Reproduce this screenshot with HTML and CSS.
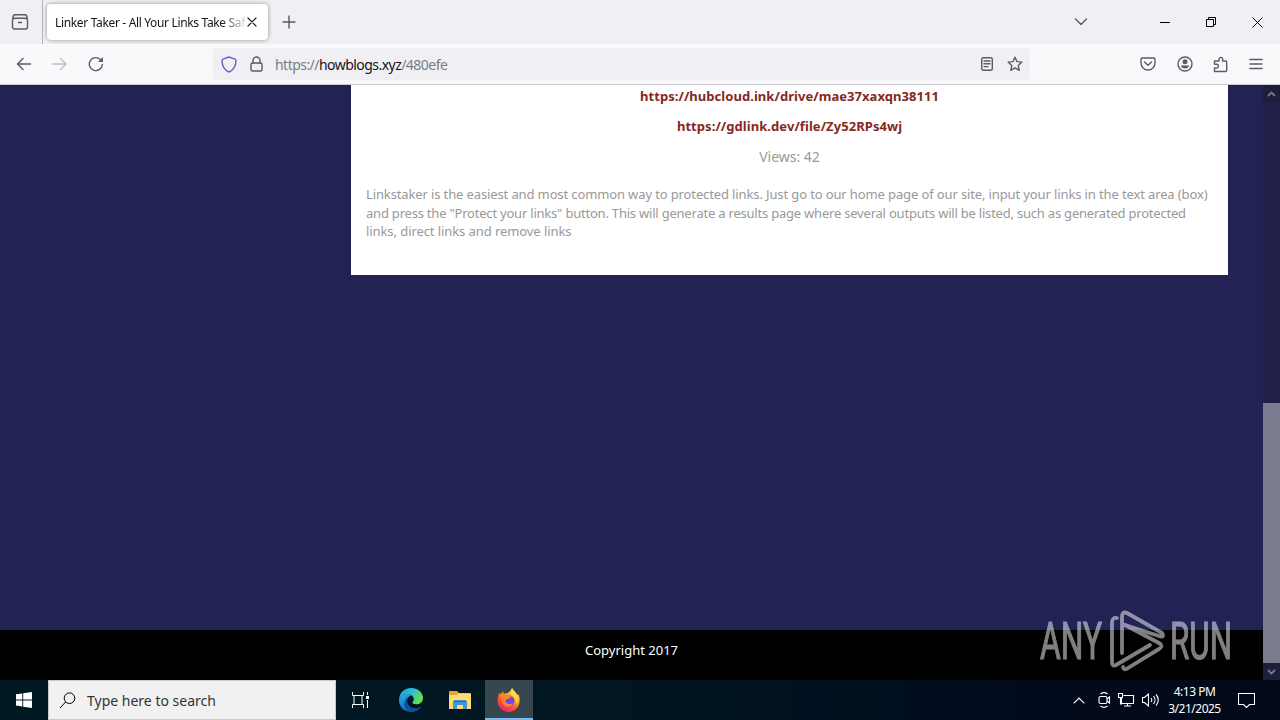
FILE: index.html
```html
<!DOCTYPE html>
<html lang="en">
<head>
<meta charset="utf-8">
<title>Linker Taker</title>
<link rel="stylesheet" href="styles.css">
</head>
<body>
<div class="screen">
  <header class="tabs">
    <div class="tabs-view"><svg width="18" height="18" viewBox="0 0 18 18" class="ico"><path d="M4 1.700h10M3.500 5.200h11a2 2 0 0 1 2 2v6.800a2 2 0 0 1-2 2h-11a2 2 0 0 1-2-2V7.200a2 2 0 0 1 2-2zM7.500 9.500h3M1.700 5c.3-2 1-3.300 2.300-3.300M16.300 5c-.3-2-1-3.300-2.300-3.300"/></svg></div>
    <div class="tab"><span class="tab-title">Linker Taker - All Your Links Take Saf</span><svg width="10" height="10" viewBox="0 0 10 10" class="ico dark"><path d="M1 1l8 8M9 1l-8 8"/></svg></div>
    <svg width="14" height="14" viewBox="0 0 14 14" class="ico newtab"><path d="M7 1v12M1 7h12"/></svg>
    <div class="window-buttons">
      <svg width="14" height="10" viewBox="0 0 14 10" class="ico"><path d="M1.500 2L7 7.500 12.500 2"/></svg>
      <svg width="11" height="11" viewBox="0 0 11 11" class="ico black minimize"><path d="M0 5.500h10"/></svg>
      <svg width="11" height="11" viewBox="0 0 11 11" class="ico black"><path d="M.5 2.500h7v7h-7zM2.500 2.500v-2h7v7h-2"/></svg>
      <svg width="11" height="11" viewBox="0 0 11 11" class="ico black"><path d="M.5.5l10 10M10.500.5l-10 10"/></svg>
    </div>
  </header>
  <nav class="toolbar">
    <div class="nav-buttons">
      <svg width="16" height="16" viewBox="0 0 16 16" class="ico"><path d="M14.500 8H1.500M7 2.500L1.500 8 7 13.500"/></svg>
      <svg width="16" height="16" viewBox="0 0 16 16" class="ico off"><path d="M1 8h13M8.500 2.500L14 8 8.500 13.500"/></svg>
      <svg width="16" height="16" viewBox="0 0 16 16" class="ico"><path d="M14.300 8.500A6.500 6.500 0 1 1 12.300 3.400L14 5"/><path d="M15 1v5h-5z" fill="#5b5b66" stroke="none"/></svg>
    </div>
    <div class="urlbar">
      <svg width="16" height="17" viewBox="0 0 16 17" class="ico shield"><path d="M8 1l6 2.200c.8.3 1 .7 1 1.500-.1 5-2 9-7 11.300C3 13.700 1.100 9.700 1 4.700c0-.8.2-1.200 1-1.500z"/></svg>
      <svg width="13" height="16" viewBox="0 0 13 16" class="ico lock"><rect x="1" y="7" width="11" height="8" rx="1.500"/><path d="M3 7V4.500a3.500 3.500 0 0 1 7 0V7"/></svg>
      <span class="url">https://<b>howblogs.xyz</b>/480efe</span>
      <svg width="12" height="14" viewBox="0 0 12 14" class="ico reader"><rect x=".7" y=".7" width="10.600" height="12.600" rx="1.500"/><path d="M3 4h6M3 6.800h6M3 9.600h4"/></svg>
      <svg width="16" height="16" viewBox="0 0 16 16" class="ico"><path d="M8 1.200l2 4.400 4.900.5-3.700 3.300 1 4.900L8 11.800l-4.200 2.500 1-4.900L1.100 6.100 6 5.600z"/></svg>
    </div>
    <div class="tools">
      <svg width="16" height="14" viewBox="0 0 16 14" class="ico"><path d="M2.500 1h11c1 0 1.500.6 1.500 1.500V6a7 7 0 0 1-14 0V2.500C1 1.600 1.500 1 2.500 1zM4.500 5L8 8.300 11.500 5"/></svg>
      <svg width="16" height="16" viewBox="0 0 16 16" class="ico"><circle cx="8" cy="8" r="7"/><g fill="#5b5b66" stroke="none"><circle cx="8" cy="5.800" r="2.500"/><path d="M4 9.500h8c0 2-2 3-4 3s-4-1-4-3z"/></g></svg>
      <svg width="15" height="17" viewBox="0 0 15 17" class="ico"><path d="M1.500 15.500V12h2a1.800 1.800 0 0 0 0-3.800h-2V5H6V3.200a1.800 1.800 0 0 1 3.600 0V5h2.900c.8 0 1.200.4 1.200 1.200v8.100c0 .8-.4 1.200-1.200 1.200z"/></svg>
      <svg width="14" height="12" viewBox="0 0 14 12" class="ico"><path d="M1 1.500h12M1 6h12M1 10.500h12"/></svg>
    </div>
  </nav>
  <main class="viewport">
    <div class="page">
      <article class="card">
        <a class="link link-one">https://hubcloud.ink/drive/mae37xaxqn38111</a>
        <a class="link link-two">https://gdlink.dev/file/Zy52RPs4wj</a>
        <p class="views">Views: 42</p>
        <p class="about"><span class="l1">Linkstaker is the easiest and most common way to protected links. Just go to our home page of our site, input your links in the text area (box)</span><span class="l2">and press the "Protect your links" button. This will generate a results page where several outputs will be listed, such as generated protected</span><span class="l3">links, direct links and remove links</span></p>
      </article>
      <footer class="footer"><span>Copyright 2017</span></footer>
    </div>
    <aside class="scrollbar">
      <div class="arrow"><svg width="9" height="6" viewBox="0 0 9 6"><path d="M1 5l3.500-3.500L8 5"/></svg></div>
      <div class="track"></div>
      <div class="thumb"></div>
      <div class="arrow"><svg width="9" height="6" viewBox="0 0 9 6"><path d="M1 1l3.500 3.500L8 1"/></svg></div>
    </aside>
  </main>
  <footer class="taskbar">
    <div class="start"><svg width="16" height="16" viewBox="0 0 16 16" fill="#fff"><path d="M0 2.300L6.300 1.400V7.400H0zM7.200 1.200L16 0v7.400H7.200zM0 8.400h6.300v6L0 13.500zM7.200 8.400H16V16l-8.800-1.300z"/></svg></div>
    <div class="search"><svg width="17" height="17" viewBox="0 0 17 17" class="ico black"><circle cx="10.500" cy="6.200" r="5.300"/><path d="M6.600 10L1 16"/></svg><span>Type here to search</span></div>
    <div class="app"><svg width="17" height="16" viewBox="0 0 17 16" fill="none" stroke="#fff"><path d="M.5 0v3.500h11V0M.5 16v-3.500h11V16M2 3.500v9M10 3.500v9M15.500 0v3M15.500 8v8"/><path d="M14 4h3v3h-3z" fill="#fff" stroke="none"/></svg></div>
    <div class="app edge"><svg width="24" height="24" viewBox="0 0 24 24"><defs><linearGradient id="edge-top" x2="1" y2=".4"><stop stop-color="#2295dc"/><stop offset=".55" stop-color="#2abfd6"/><stop offset="1" stop-color="#68db51"/></linearGradient><linearGradient id="edge-low" x2=".6" y2="1"><stop stop-color="#2db1ea"/><stop offset="1" stop-color="#0e55ac"/></linearGradient></defs><path d="M0 12C0 5 5 0 12 0c7 0 12 4.700 12 10 0 4-3 6.300-6.500 6.300-3 0-4.200-1-4-2 .1-.6 1.300-1.200 1.300-3C14.800 8.500 12 6 8.500 6 4 6 1 8.500 0 12z" fill="url(#edge-top)"/><path d="M0 12C1 8 4 6 8.300 6c2 0 3.300.5 4.300 1.200C9.700 8 8 10.500 8 13c0 4.600 4 8 9.500 7.400 1.700-.2 3-.8 4.500-1.600C20 22 16.500 24 12 24 5 24 0 19 0 12z" fill="url(#edge-low)"/><path d="M8 13c0 4.600 4 8 9.500 7.400 1.700-.2 3-.8 4.500-1.600-2 3.200-5.500 5.200-10 5.200-4-1-6.500-4.500-6.500-8.500 0-3.500 2.500-7 7.100-8.300C9.700 8 8 10.500 8 13z" fill="#114f97"/></svg></div>
    <div class="app"><svg width="22" height="18" viewBox="0 0 22 18"><path d="M0 1c0-.6.400-1 1-1h7l2 2h10.500c.6 0 1 .4 1 1v14H0z" fill="#e8a82b"/><path d="M0 4h8l1.500-1.500H22V18H0z" fill="#ffdb70"/><path d="M4 18V10.500l1.500-1.500h11l1.500 1.500V18h-4v-4H8v4z" fill="#4197d6"/><path d="M5 10h12v1H5z" fill="#226ea9"/></svg></div>
    <div class="app active"><svg width="24" height="24" viewBox="0 0 24 24"><defs><linearGradient id="fox" x1=".8" y1="0" x2=".2" y2="1"><stop stop-color="#fff14a"/><stop offset=".35" stop-color="#ffab24"/><stop offset=".65" stop-color="#ff5130"/><stop offset="1" stop-color="#e9187c"/></linearGradient></defs><path d="M15 0c1 2.500 4 4 5 7l1-1c1.500 2.500 2 5 1.500 8C21.800 20 17 24 12 24 5.500 24 .5 19 .5 12.500c0-3.500 1-6 3-8v2L6.500 3v3c1-.6 2-.8 3-.7C11 5.200 14 3 15 0z" fill="url(#fox)"/><circle cx="12" cy="13" r="5.500" fill="#7846dc"/><path d="M4 9c3-3 6-3 9-1l2 1c-2 0-3 2-5 2-2.500 1-2 4 1 5 2 .6 4-.5 5-1-1 3-4 4.500-7 3.500C5 17 3.500 12.500 4 9z" fill="#ff862b"/><path d="M15 0c1 2.500 4 4 5 7 1.500 4 1 7-1 9 0-4-1-7-4.500-9C13 5 14 2 15 0z" fill="#ffdb3c"/></svg></div>
    <div class="tray">
      <svg width="12" height="7" viewBox="0 0 12 7"><path d="M.7 6.300L6 1l5.300 5.300"/></svg>
      <svg width="13" height="16" viewBox="0 0 13 16"><rect x="1" y="4.500" width="8" height="7" rx="1.500"/><path d="M9 7l2.500-2v6L9 9M2.500 2c2-1.500 5-1.500 7 0M2.500 14c2 1.500 5 1.500 7 0"/></svg>
      <svg width="17" height="14" viewBox="0 0 17 14"><path d="M5.500 2.500h10v8h-12V5M9.500 10.500V13M6 13h7M.5.500h4v4h-4zM2.500 4.500V11H4"/></svg>
      <svg width="17" height="14" viewBox="0 0 17 14"><path d="M.5 4.500h2l4-3.500v12l-4-3.500h-2zM9 5c1 1.200 1 2.800 0 4M11.500 3.200c2 2.200 2 5.400 0 7.600M14 1.500c3 3.200 3 7.800 0 11"/></svg>
      <div class="clock"><span>4:13 PM</span><span>3/21/2025</span></div>
      <svg width="17" height="17" viewBox="0 0 17 17"><path d="M.5 1.500h16v11h-5L8.500 15.500l-3-3h-5z"/></svg>
    </div>
  </footer>
  <svg class="watermark" width="200" height="68" viewBox="0 0 200 68">
    <text x="3" y="52" textLength="62" lengthAdjust="spacingAndGlyphs">ANY</text>
    <g fill="none" stroke="currentColor" stroke-width="3.800" stroke-linecap="round" stroke-linejoin="round"><path d="M80 11q-5-1-5 5V55q0 5 4 3L113 38"/><path d="M85 46V10q0-6 5-4L125 26q3 5-3 3L88 18"/><path d="M88 18L122 36q5 3 0 6L91 61q-4 3-5-1"/></g>
    <text x="133" y="52" textLength="62" lengthAdjust="spacingAndGlyphs">RUN</text>
  </svg>
</div>
</body>
</html>
```
FILE: styles.css
```css
* { box-sizing: border-box; }
body { margin: 0; overflow: hidden; font-family: "Noto Sans", "Open Sans", sans-serif; }
p { margin: 0; }
svg { flex: none; display: block; }
.screen { position: relative; width: 1280px; height: 720px; display: flex; flex-direction: column; }
.ico { fill: none; stroke: #5b5b66; stroke-width: 1.4; stroke-linejoin: round; stroke-linecap: round; }
.dark { stroke: #222; stroke-width: 1.2; }
.black { stroke: #000; stroke-width: 1; stroke-linejoin: miter; stroke-linecap: butt; }
.off { stroke: #bdbdc3; }

.tabs { height: 44px; background: #f0eff4; display: flex; align-items: center; }
.tabs-view { width: 43px; height: 44px; border-right: 1px solid #b5b4bb; display: flex; align-items: center; padding-left: 11px; }
.tab { width: 221px; height: 36px; margin-left: 4px; border-radius: 4px; background: #fff; box-shadow: 0 0 4px rgba(0,0,0,.4); display: flex; align-items: center; padding: 0 11px 0 8px; justify-content: space-between; }
.tab-title { width: 190px; overflow: hidden; white-space: nowrap; font-size: 12px; letter-spacing: -.34px; color: #15141a; -webkit-mask-image: linear-gradient(90deg, #000 166px, transparent 194px); mask-image: linear-gradient(90deg, #000 166px, transparent 194px); }
.newtab { margin-left: 14px; }
.window-buttons { margin-left: auto; padding-right: 17px; display: flex; align-items: center; }
.window-buttons svg + svg { margin-left: 35px; }
.window-buttons .minimize { margin-left: 72px; }

.toolbar { height: 41px; background: #f9f9fc; border-bottom: 1px solid #ccccd0; display: flex; align-items: center; }
.nav-buttons { width: 213px; display: flex; gap: 20px; padding-left: 16px; }
.urlbar { width: 817px; height: 32px; background: #f0f0f4; border-radius: 2px; display: flex; align-items: center; padding: 0 7px 0 8px; }
.shield { stroke: #6a62c4; }
.lock { margin-left: 13px; }
.url { margin-left: 12px; font-size: 14px; letter-spacing: -.54px; color: #7b7b82; white-space: nowrap; }
.url b { font-weight: 400; color: #15141a; }
.reader { margin-left: auto; margin-right: 14px; }
.tools { flex: 1; display: flex; align-items: center; justify-content: space-between; padding: 0 17px 0 110px; }

.viewport { height: 595px; display: flex; }
.page { width: 1263px; background: #222255; display: flex; flex-direction: column; }
.card { width: 877px; height: 190px; margin-left: 351px; background: #fff; color: #999; display: flex; flex-direction: column; align-items: center; font-size: 13px; }
.link { height: 30px; line-height: 22px; font-size: 13px; font-weight: 700; color: #85281f; white-space: nowrap; }
.link-one { letter-spacing: .05px; }
.link-two { letter-spacing: .06px; }
.views { line-height: 23px; height: 40px; font-size: 14px; }
.about { align-self: stretch; padding-left: 15px; line-height: 18.500px; display: flex; flex-direction: column; white-space: nowrap; }
.l1 { letter-spacing: -.124px; }
.l2 { letter-spacing: -.211px; }
.l3 { letter-spacing: -.08px; }
.footer { height: 50px; margin-top: auto; background: #000; color: #fff; text-align: center; font-size: 13px; line-height: 41px; }
.scrollbar { width: 17px; background: #20204a; display: flex; flex-direction: column; }
.scrollbar svg { fill: none; stroke: #77788c; stroke-width: 1.8; }
.arrow { height: 17px; display: flex; align-items: center; justify-content: center; background: #1d1d3c; }
.track { height: 301px; }
.thumb { height: 260px; background: #797b8f; }

.taskbar { height: 40px; background: linear-gradient(90deg, #001820 0, #001722 45%, #020b1e 80%, #020918); display: flex; }
.start { width: 48px; display: flex; align-items: center; justify-content: center; }
.search { width: 288px; background: #f1f1f1; border: 1px solid #c9c9c9; display: flex; align-items: center; gap: 11px; padding-left: 10px; color: #333; font-size: 14px; white-space: nowrap; }
.app { width: 48px; display: flex; align-items: center; justify-content: center; }
.app + .app { margin-left: 1px; }
.app.edge { margin-left: 3px; }
.active { background: #36474f; border-bottom: 2px solid #76b9ed; padding-top: 2px; }
.tray { margin-left: auto; display: flex; align-items: center; color: #fff; padding-right: 25px; }
.tray svg { fill: none; stroke: #fff; stroke-width: 1.1; margin-right: 7px; }
.tray svg:first-child { margin-right: 13px; }
.tray svg:last-child { margin: 0; }
.clock { width: 55px; margin: 0 16px 0 1px; display: flex; flex-direction: column; align-items: center; font-size: 12px; line-height: 17.500px; letter-spacing: -.5px; white-space: nowrap; }
.watermark { position: absolute; left: 1037px; top: 607px; color: #fff; opacity: .5; }
.watermark text { font: 400 51px Roboto, sans-serif; fill: currentColor; stroke: currentColor; stroke-width: 1.2; }
```
